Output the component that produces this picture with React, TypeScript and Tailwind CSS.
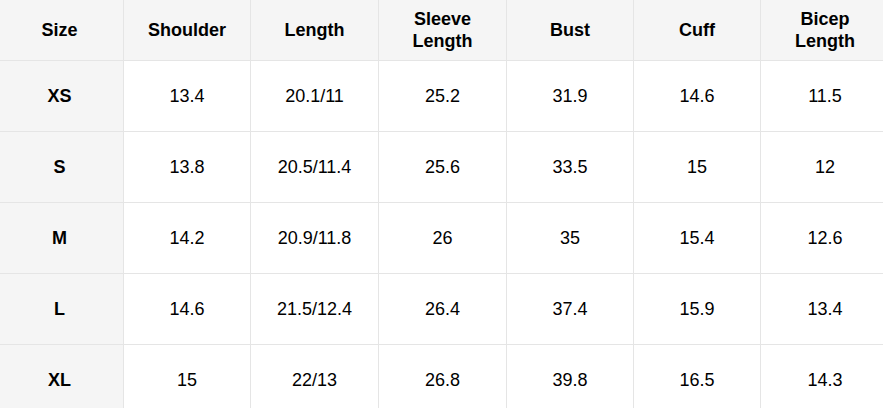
const HEAD = ['Size', 'Shoulder', 'Length', 'Sleeve Length', 'Bust', 'Cuff', 'Bicep Length']

const ROWS = [
  ['XS', '13.4', '20.1/11', '25.2', '31.9', '14.6', '11.5'],
  ['S', '13.8', '20.5/11.4', '25.6', '33.5', '15', '12'],
  ['M', '14.2', '20.9/11.8', '26', '35', '15.4', '12.6'],
  ['L', '14.6', '21.5/12.4', '26.4', '37.4', '15.9', '13.4'],
  ['XL', '15', '22/13', '26.8', '39.8', '16.5', '14.3'],
]

export default function App() {
  return (
    <div className="w-[883px] h-[408px] overflow-hidden bg-white font-['Liberation_Sans',Arial,sans-serif] text-[18px] text-black">
      <div className="-ml-[4px] w-max grid grid-cols-[127px_126px_127px_127px_126px_126px_128px] grid-rows-[60px_repeat(5,70px)] gap-px bg-[#e5e5e5]">
        {HEAD.map(h => (
          <div key={h}
            className="bg-[#f5f5f5] flex items-center justify-center text-center font-bold leading-[22px] px-6">
            {h}
          </div>
        ))}
        {ROWS.map(r => r.map((v, i) => (
          <div key={r[0] + i}
            className={`flex items-center justify-center text-center
              ${i === 0 ? 'bg-[#f5f5f5] font-bold' : 'bg-white'}`}>
            {v}
          </div>
        )))}
      </div>
    </div>
  )
}
